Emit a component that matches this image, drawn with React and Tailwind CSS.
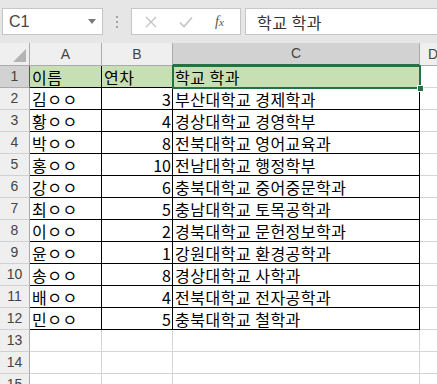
import React from "react";

const rows = [
  ["이름", "연차", "학교 학과"],
  ["김ㅇㅇ", "3", "부산대학교 경제학과"],
  ["황ㅇㅇ", "4", "경상대학교 경영학부"],
  ["박ㅇㅇ", "8", "전북대학교 영어교육과"],
  ["홍ㅇㅇ", "10", "전남대학교 행정학부"],
  ["강ㅇㅇ", "6", "충북대학교 중어중문학과"],
  ["최ㅇㅇ", "5", "충남대학교 토목공학과"],
  ["이ㅇㅇ", "2", "경북대학교 문헌정보학과"],
  ["윤ㅇㅇ", "1", "강원대학교 환경공학과"],
  ["송ㅇㅇ", "8", "경상대학교 사학과"],
  ["배ㅇㅇ", "4", "전북대학교 전자공학과"],
  ["민ㅇㅇ", "5", "충북대학교 철학과"],
  null,
  null,
  null,
];

const font = { fontFamily: '"Noto Sans CJK KR", "Noto Sans", sans-serif' };

function Toolbar() {
  return (
    <div className="flex h-[43px] items-start bg-[#e6e6e6] pt-[8px]">
      {/* name box */}
      <div className="ml-[2px] flex h-[27px] w-[101px] items-center border border-[#c6c6c6] bg-white pl-[6px]">
        <span className="flex-1 text-[16px] text-[#444]" style={{ fontFamily: '"Liberation Sans", sans-serif' }}>
          C1
        </span>
        <svg width="8" height="5" className="mr-[6px]" viewBox="0 0 8 5">
          <path d="M0 0 L8 0 L4 5 Z" fill="#7a7a7a" />
        </svg>
      </div>
      {/* grip dots */}
      <div className="ml-[13px] mt-[8px] flex h-[12px] flex-col justify-between">
        <span className="block h-[2px] w-[2px] bg-[#a0a0a0]" />
        <span className="block h-[2px] w-[2px] bg-[#a0a0a0]" />
        <span className="block h-[2px] w-[2px] bg-[#a0a0a0]" />
      </div>
      {/* cancel / enter / function buttons */}
      <div className="ml-[13px] flex h-[27px] w-[110px] items-center border border-[#c6c6c6] bg-white">
        <svg width="12" height="12" viewBox="0 0 12 12" className="ml-[13px]">
          <path d="M1 1 L11 11 M11 1 L1 11" stroke="#c4c4c4" strokeWidth="1.4" />
        </svg>
        <svg width="14" height="12" viewBox="0 0 14 12" className="ml-[22px]">
          <path d="M1 6.5 L5 10.5 L13 1.5" stroke="#c4c4c4" strokeWidth="1.6" fill="none" />
        </svg>
        <span
          className="ml-[22px] text-[14px] italic text-[#555]"
          style={{ fontFamily: '"Liberation Serif", serif' }}
        >
          f<span className="text-[11px]">x</span>
        </span>
      </div>
      {/* formula input */}
      <div className="ml-[4px] flex h-[27px] flex-1 items-center border border-r-0 border-[#c6c6c6] bg-white pl-[11px]">
        <span className="text-[16px] tracking-[0.5px] text-[#333]" style={font}>
          학교 학과
        </span>
      </div>
    </div>
  );
}

function ColHeader({ label, selected, last }) {
  return (
    <div
      className={
        "flex h-[23px] items-center justify-center text-[14px] " +
        (selected
          ? "border-b-2 border-r border-b-[#217346] border-r-[#ababab] bg-[#d2d2d2] text-[#444]"
          : "border-b border-r border-b-[#ababab] border-r-[#ababab] bg-[#efefef] text-[#444]") +
        (last ? " justify-start pl-[8px]" : "")
      }
      style={{ fontFamily: '"Liberation Sans", sans-serif' }}
    >
      {label}
    </div>
  );
}

export default function App() {
  return (
    <div className="h-[384px] w-[437px] overflow-hidden bg-white" style={font}>
      <Toolbar />
      <div className="relative grid grid-cols-[30px_72px_71px_247px_1fr]">
        {/* corner */}
        <div className="relative h-[23px] border-b border-r border-[#ababab] bg-[#efefef]">
          <svg width="13" height="13" viewBox="0 0 13 13" className="absolute bottom-[3px] right-[3px]">
            <path d="M13 0 L13 13 L0 13 Z" fill="#b4b4b4" />
          </svg>
        </div>
        <ColHeader label="A" />
        <ColHeader label="B" />
        <ColHeader label="C" selected />
        <ColHeader label="D" last />

        {rows.map((r, i) => {
          const n = i + 1;
          const head = n === 1;
          const inTable = r !== null;
          const cellBase =
            "h-[22px] border-b border-r flex items-center overflow-hidden whitespace-nowrap text-[16px] tracking-[0.5px] text-black";
          const tb = inTable ? "border-black" : "border-[#d4d4d4]";
          const fill = head ? "bg-[#c6e0b4]" : "bg-white";
          return (
            <React.Fragment key={n}>
              <div
                className={
                  "flex h-[22px] items-center justify-center border-b border-r text-[14px] " +
                  (head
                    ? "border-b-[#ababab] border-r-[#217346] bg-[#d2d2d2] text-[#444]"
                    : "border-b-[#d0d0d0] border-r-[#ababab] bg-[#efefef] text-[#444]")
                }
                style={{ fontFamily: '"Liberation Sans", sans-serif' }}
              >
                {n}
              </div>
              <div className={`${cellBase} ${tb} ${fill} pl-[2px]`}>{r ? r[0] : ""}</div>
              <div className={`${cellBase} ${tb} ${fill} ${head ? "pl-[2px]" : "justify-end pr-[1px] tracking-normal"}`}>
                {r ? r[1] : ""}
              </div>
              <div className={`${cellBase} ${tb} ${fill} pl-[2px]`}>{r ? r[2] : ""}</div>
              <div className={`${cellBase} border-[#d4d4d4] bg-white`} />
            </React.Fragment>
          );
        })}

        {/* active cell outline on C1 with its fill handle */}
        <div className="pointer-events-none absolute left-[172px] top-[22px] h-[24px] w-[249px] border-2 border-[#217346]" />
        <div className="pointer-events-none absolute left-[417px] top-[42px] h-[7px] w-[7px] border border-white bg-[#217346]" />
      </div>
    </div>
  );
}
